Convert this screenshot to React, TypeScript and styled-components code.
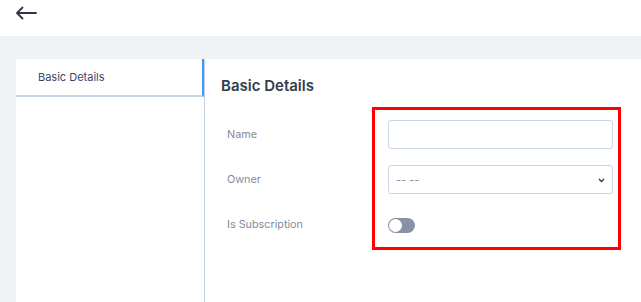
import React from "react";
import styled, { createGlobalStyle } from "styled-components";

const GlobalStyle = createGlobalStyle`
  html, body {
    margin: 0;
    padding: 0;
    background: #ffffff;
    font-family: "Inter", "Roboto", "Liberation Sans", sans-serif;
  }
  * {
    box-sizing: border-box;
  }
`;

const Page = styled.div`
  width: 641px;
  height: 302px;
  display: flex;
  flex-direction: column;
  overflow: hidden;
`;

const TopBar = styled.div`
  height: 36px;
  background: #ffffff;
  display: flex;
  align-items: flex-start;
  padding: 4px 0 0 15px;
`;

const BackButton = styled.button`
  border: none;
  background: none;
  padding: 0;
  width: 24px;
  height: 18px;
  cursor: pointer;
  display: flex;
  align-items: center;
  color: #2f3542;
`;

const Body = styled.div`
  flex: 1;
  background: #eef2f5;
  display: flex;
  padding: 23px 0 0 16px;
`;

const Sidebar = styled.div`
  width: 189px;
  background: #ffffff;
  border-right: 1px solid #c3d1e0;
  display: flex;
  flex-direction: column;
`;

const Tab = styled.div<{ $active?: boolean }>`
  height: 38px;
  display: flex;
  align-items: center;
  padding-left: 22px;
  font-size: 11px;
  color: #3b4766;
  border-bottom: 2px solid #c8d5e3;
  border-right: 2px solid ${(p) => (p.$active ? "#3a9bf2" : "transparent")};
`;

const Main = styled.div`
  flex: 1;
  background: #ffffff;
  padding: 17px 16px 0 16px;
`;

const Heading = styled.h2`
  margin: 0 0 16px 0;
  font-size: 15px;
  line-height: 20px;
  font-weight: 600;
  color: #333c4e;
`;

const Form = styled.div`
  position: relative;
  display: grid;
  grid-template-columns: 161px 225px;
  grid-auto-rows: 45px;
  padding-left: 6px;
`;

const Label = styled.label`
  display: flex;
  align-items: center;
  font-size: 10.8px;
  color: #858a9b;
`;

const Field = styled.div`
  position: relative;
  display: flex;
  align-items: center;
`;

const TextInput = styled.input`
  width: 100%;
  height: 29px;
  border: 1px solid #c8d5e3;
  border-radius: 3px;
  padding: 0 8px;
  font: inherit;
  font-size: 11px;
  outline: none;
`;

const Select = styled.select`
  width: 100%;
  height: 29px;
  border: 1px solid #c8d5e3;
  border-radius: 3px;
  padding: 0 7px;
  font: inherit;
  font-size: 11px;
  color: #8a8fa0;
  background: #ffffff;
  appearance: none;
  outline: none;
`;

const Chevron = styled.svg`
  position: absolute;
  right: 8px;
  top: 50%;
  margin-top: -2px;
  pointer-events: none;
`;

const Toggle = styled.div<{ $on?: boolean }>`
  position: relative;
  width: 27px;
  height: 15px;
  border-radius: 8px;
  background: ${(p) => (p.$on ? "#3a9bf2" : "#8693a7")};
  margin-top: 2px;

  &::after {
    content: "";
    position: absolute;
    top: 1px;
    left: ${(p) => (p.$on ? "13px" : "1px")};
    width: 13px;
    height: 13px;
    border-radius: 50%;
    background: #ffffff;
  }
`;

const Highlight = styled.div`
  position: absolute;
  left: 151px;
  top: -5px;
  width: 249px;
  height: 143px;
  border: 3px solid #ff0000;
  pointer-events: none;
`;

export default function App() {
  return (
    <>
      <GlobalStyle />
      <Page>
        <TopBar>
          <BackButton aria-label="Back">
            <svg width="22" height="14" viewBox="0 0 22 14" fill="none">
              <path
                d="M21 7H2M7.5 1.5L2 7l5.5 5.5"
                stroke="currentColor"
                strokeWidth="1.8"
                strokeLinecap="round"
                strokeLinejoin="round"
              />
            </svg>
          </BackButton>
        </TopBar>
        <Body>
          <Sidebar>
            <Tab $active>Basic Details</Tab>
          </Sidebar>
          <Main>
            <Heading>Basic Details</Heading>
            <Form>
              <Label>Name</Label>
              <Field>
                <TextInput type="text" />
              </Field>
              <Label>Owner</Label>
              <Field>
                <Select defaultValue="">
                  <option value="">-- --</option>
                </Select>
                <Chevron width="7" height="5" viewBox="0 0 7 5">
                  <path
                    d="M1 1l2.5 2.5L6 1"
                    stroke="#2f3542"
                    strokeWidth="1.3"
                    fill="none"
                  />
                </Chevron>
              </Field>
              <Label>Is Subscription</Label>
              <Field>
                <Toggle />
              </Field>
              <Highlight />
            </Form>
          </Main>
        </Body>
      </Page>
    </>
  );
}
